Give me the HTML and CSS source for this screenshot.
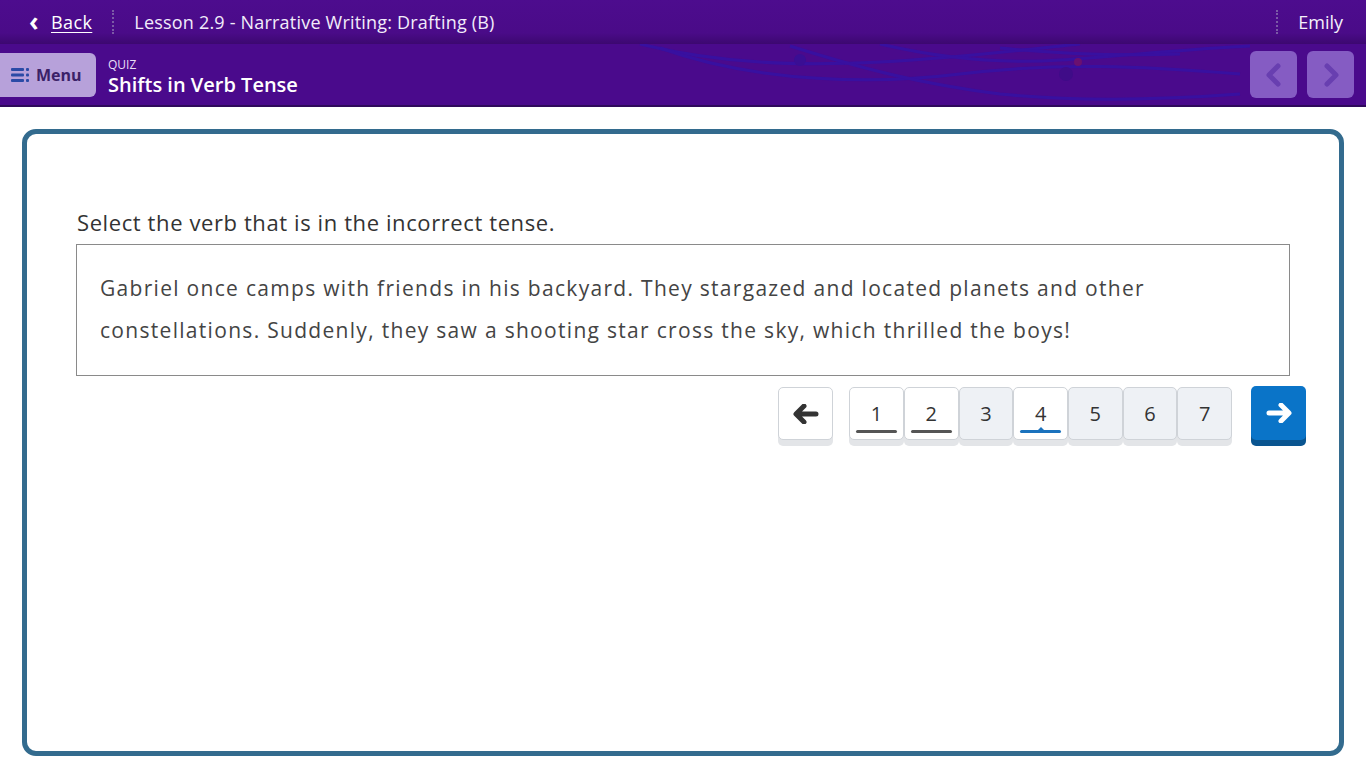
FILE: index.html
```
<!DOCTYPE html>
<html>
<head>
<meta charset="utf-8">
<title>Shifts in Verb Tense</title>
<link rel="stylesheet" href="styles.css">
</head>
<body>
<div class="topBar">
	<a class="backLink" href="#"><span class="chev">&#8249;</span><span class="backText">Back</span></a>
	<span class="dots"></span>
	<span class="lessonTitle">Lesson 2.9 - Narrative Writing: Drafting (B)</span>
	<span class="spacer"></span>
	<span class="dots"></span>
	<span class="userName">Emily</span>
</div>
<div class="subBar">
	<svg class="waves" width="1366" height="62" viewBox="0 0 1366 62">
		<g fill="none" stroke="#3512a4" stroke-width="3" opacity="0.85">
			<path d="M640 0 C 720 20, 800 22, 880 18 C 960 14, 1020 6, 1080 0"/>
			<path d="M660 4 C 760 40, 880 40, 960 30 C 1060 18, 1140 22, 1240 30"/>
			<path d="M790 2 C 860 24, 920 40, 1000 50 C 1080 58, 1160 56, 1240 50"/>
			<path d="M880 0 C 940 14, 1000 20, 1060 16 C 1120 12, 1200 4, 1250 2"/>
			<path d="M1000 4 C 1060 10, 1120 12, 1180 10"/>
		</g>
		<circle cx="800" cy="16" r="6" fill="#3a0e94"/>
		<circle cx="1066" cy="30" r="7" fill="#3f0c88"/>
		<circle cx="1078" cy="18" r="4" fill="#6a1070"/>
	</svg>
	<button class="menuBtn">
		<svg width="19" height="14" viewBox="0 0 19 14">
			<g fill="#2a4aa6">
				<rect x="0" y="0" width="13" height="3" rx="1"/>
				<rect x="0" y="5.5" width="13" height="3" rx="1"/>
				<rect x="0" y="11" width="13" height="3" rx="1"/>
				<rect x="15" y="0" width="3" height="3" rx="1"/>
				<rect x="15" y="5.5" width="3" height="3" rx="1"/>
				<rect x="15" y="11" width="3" height="3" rx="1"/>
			</g>
		</svg>
		<span>Menu</span>
	</button>
	<div class="quizTitle">
		<div class="quizLabel">QUIZ</div>
		<div class="quizName">Shifts in Verb Tense</div>
	</div>
	<span class="spacer"></span>
	<button class="pageBtn">
		<svg width="20" height="24" viewBox="0 0 20 24"><path d="M14 3 L5 12 L14 21" fill="none" stroke="#6b44b4" stroke-width="5" stroke-linecap="round" stroke-linejoin="round"/></svg>
	</button>
	<button class="pageBtn">
		<svg width="20" height="24" viewBox="0 0 20 24"><path d="M6 3 L15 12 L6 21" fill="none" stroke="#6b44b4" stroke-width="5" stroke-linecap="round" stroke-linejoin="round"/></svg>
	</button>
</div>
<div class="card">
	<div class="prompt">Select the verb that is in the incorrect tense.</div>
	<div class="passage">Gabriel once camps with friends in his backyard. They stargazed and located planets and other constellations. Suddenly, they saw a shooting star cross the sky, which thrilled the boys!</div>
	<div class="navRow">
		<button class="arrowBtn prevBtn">
			<svg width="26" height="20" viewBox="0 0 26 20"><path d="M11 2 L3 10 L11 18 M4 10 L23 10" fill="none" stroke="#333" stroke-width="5" stroke-linecap="round" stroke-linejoin="round"/></svg>
		</button>
		<div class="numbers">
			<button class="num done">1</button>
			<button class="num done">2</button>
			<button class="num">3</button>
			<button class="num current">4</button>
			<button class="num">5</button>
			<button class="num">6</button>
			<button class="num">7</button>
		</div>
		<button class="arrowBtn nextBtn">
			<svg width="26" height="20" viewBox="0 0 26 20"><path d="M15 2 L23 10 L15 18 M22 10 L3 10" fill="none" stroke="#fff" stroke-width="5" stroke-linecap="round" stroke-linejoin="round"/></svg>
		</button>
	</div>
</div>
</body>
</html>
```

FILE: styles.css
```
body
{
	margin: 0;
	background-color: #ffffff;
	font-family: "Open Sans", "Liberation Sans", sans-serif;
	overflow: hidden;
}
button
{
	font-family: inherit;
	border: none;
	cursor: pointer;
	padding: 0;
}
.spacer
{
	flex: 1;
}
.topBar
{
	height: 44px;
	display: flex;
	align-items: center;
	padding: 0 23px 0 29px;
	background: linear-gradient(#4d0c8e 0%, #4a0b88 75%, #3c0870 100%);
	color: #ffffff;
	font-size: 18px;
}
.backLink
{
	color: #ffffff;
	display: flex;
	align-items: center;
	text-decoration: none;
	letter-spacing: 0.4px;
}
.chev
{
	font-size: 26px;
	font-weight: 700;
	line-height: 20px;
	margin-right: 12px;
	margin-top: -3px;
}
.backText
{
	text-decoration: underline;
	text-underline-offset: 3px;
}
.dots
{
	width: 0;
	height: 24px;
	border-left: 2px dotted #7b5aa6;
	margin: 0 20px;
}
.lessonTitle
{
	color: #f2ecfa;
	letter-spacing: 0.2px;
}
.userName
{
	color: #f5f0fb;
}
.subBar
{
	position: relative;
	height: 61px;
	display: flex;
	align-items: center;
	background-color: #4a0a8c;
	border-bottom: 2px solid #2f0a5c;
	overflow: hidden;
}
.waves
{
	position: absolute;
	left: 0;
	top: 0;
}
.menuBtn
{
	position: relative;
	height: 44px;
	width: 96px;
	margin-top: 1px;
	display: flex;
	align-items: center;
	gap: 6px;
	padding-left: 11px;
	background-color: #b7a1da;
	border-radius: 0 6px 6px 0;
	color: #3b2168;
	font-size: 16px;
	font-weight: 700;
}
.quizTitle
{
	position: relative;
	margin-left: 12px;
	color: #ffffff;
	margin-top: 7px;
}
.quizLabel
{
	font-size: 12px;
	line-height: 14px;
	color: #e8def5;
}
.quizName
{
	font-size: 20px;
	line-height: 26px;
	font-weight: 600;
}
.pageBtn
{
	position: relative;
	width: 47px;
	height: 47px;
	margin-right: 10px;
	border-radius: 6px;
	background-color: #8a63c8;
	display: flex;
	align-items: center;
	justify-content: center;
	opacity: 0.92;
}
.pageBtn:last-child
{
	margin-right: 12px;
}
.card
{
	box-sizing: border-box;
	margin: 22px 22px 0 22px;
	height: 627px;
	border: 5px solid #336b8e;
	border-radius: 14px;
	padding: 73px 49px 0 49px;
}
.prompt
{
	font-size: 22px;
	line-height: 30px;
	color: #333333;
	margin-left: 1px;
	letter-spacing: 0.6px;
}
.passage
{
	margin-top: 7px;
	border: 1px solid #8a8a8a;
	padding: 22px 24px 24px 23px;
	font-size: 21px;
	line-height: 42px;
	color: #444444;
	letter-spacing: 1.3px;
}
.navRow
{
	display: flex;
	justify-content: flex-end;
	align-items: flex-start;
	margin-top: 10px;
	margin-right: -16px;
}
.arrowBtn
{
	width: 55px;
	display: flex;
	align-items: center;
	justify-content: center;
	border-radius: 5px;
}
.prevBtn
{
	height: 53px;
	margin-top: 1px;
	background-color: #ffffff;
	border: 1px solid #cfd3d8;
	box-shadow: 0 6px 0 #e3e5e8;
	margin-right: 16px;
}
.nextBtn
{
	height: 54px;
	margin-left: 19px;
	background-color: #0a74c8;
	box-shadow: 0 6px 0 #0a5590;
}
.numbers
{
	display: flex;
	margin-top: 1px;
}
.num
{
	position: relative;
	width: 54.7px;
	height: 53px;
	border: 1px solid #cfd3d8;
	border-radius: 5px;
	background-color: #eef1f5;
	box-shadow: 0 6px 0 #e3e5e8;
	font-size: 20px;
	color: #333333;
}
.num.done, .num.current
{
	background-color: #ffffff;
}
.num.done::after, .num.current::after
{
	content: "";
	position: absolute;
	left: 6px;
	right: 6px;
	bottom: 6px;
	height: 3px;
	border-radius: 2px;
	background-color: #555555;
}
.num.current::after
{
	background-color: #1a72bd;
}
.num.current::before
{
	content: "";
	position: absolute;
	left: 50%;
	bottom: 8px;
	margin-left: -4px;
	border-left: 4px solid transparent;
	border-right: 4px solid transparent;
	border-bottom: 4px solid #1a72bd;
}
```
